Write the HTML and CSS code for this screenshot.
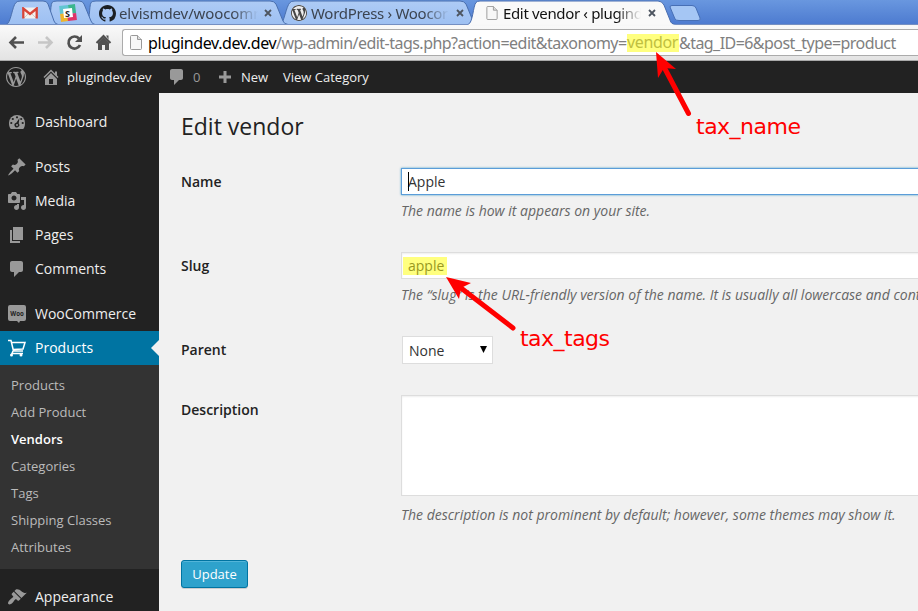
FILE: index.html
```html
<!DOCTYPE html>
<html lang="en">
<head>
<meta charset="utf-8">
<title>Edit vendor ‹ plugindev.dev</title>
<link rel="stylesheet" href="styles.css">
</head>
<body>
<svg class="defs" width="0" height="0">
  <defs>
    <symbol id="wp" viewBox="0 0 20 20"><path d="M20 10c0-5.51-4.49-10-10-10C4.48 0 0 4.49 0 10c0 5.52 4.48 10 10 10 5.51 0 10-4.48 10-10zM7.78 15.37L4.37 6.22c.55-.02 1.17-.08 1.17-.08.5-.06.44-1.13-.06-1.11 0 0-1.45.11-2.37.11-.18 0-.37 0-.58-.01C4.12 2.69 6.87 1.11 10 1.11c2.33 0 4.45.87 6.05 2.34-.68-.11-1.65.39-1.65 1.58 0 .74.45 1.36.9 2.1.35.61.55 1.36.55 2.46 0 1.49-1.4 5-1.4 5l-3.03-8.37c.54-.02.82-.17.82-.17.5-.05.44-1.25-.06-1.22 0 0-1.44.12-2.38.12-.87 0-2.33-.12-2.33-.12-.5-.03-.56 1.2-.06 1.22l.92.08 1.26 3.41zM17.41 10c.24-.64.74-1.87.43-4.25.7 1.29 1.05 2.71 1.05 4.25 0 3.29-1.73 6.24-4.4 7.78.97-2.59 1.94-5.2 2.92-7.78zM6.1 18.09C3.12 16.65 1.11 13.53 1.11 10c0-1.3.23-2.48.72-3.59C3.25 10.3 4.67 14.2 6.1 18.09zm4.03-6.63l2.58 6.98c-.86.29-1.76.45-2.71.45-.79 0-1.57-.11-2.29-.33.81-2.38 1.62-4.74 2.42-7.1z"/></symbol>
    <symbol id="home" viewBox="0 0 20 20"><path d="M16 8.5l1.53 1.53-1.06 1.06L10 4.6l-6.47 6.49-1.06-1.06L10 2.5l4 4v-2h2v4zm-6-2.46l6 5.99V18H4v-5.97zM12 17v-5H8v5h4z"/></symbol>
    <symbol id="comment" viewBox="0 0 20 20"><path d="M5 2h9c1.1 0 2 .9 2 2v7c0 1.1-.9 2-2 2h-2l-5 5v-5H5c-1.1 0-2-.9-2-2V4c0-1.1.9-2 2-2z"/></symbol>
    <symbol id="file" viewBox="0 0 12 15"><path d="M.5 1.5q0-1 1-1H7.500L11.500 4.500V13.500q0 1-1 1h-9q-1 0-1-1z" fill="#f7f7f7" stroke="#999"/><path d="M7.500.5V4.500H11.500" fill="#ddd" stroke="#999"/></symbol>
  </defs>
</svg>

<div class="browser">
  <div class="tabstrip">
    <svg class="tabshapes" width="918" height="26" viewBox="0 0 918 26">
      <defs><linearGradient id="tg" x2="0" y2="1"><stop stop-color="#aecbf5"/><stop offset="1" stop-color="#9dc0f2"/></linearGradient></defs>
      <g fill="url(#tg)" stroke="#496fae">
        <path d="M280 24.500C284 24 286 6 290 2.500Q291 1 295 1H460Q464 1 466 4L473 21Q474 24 478 24.500z"/>
        <path d="M86 24.500C90 24 89 6 91 2.500Q92 1 96 1H270Q274 1 276 4L283 21Q284 24 288 24.500z"/>
        <path d="M47 24.500C51 24 50 6 52 2.500Q53 1 57 1H79Q83 1 84 4L91 21Q92 24 95 24.500z"/>
        <path d="M6 24.500C11 24 12 6 16 2.500Q17 1 21 1H43Q47 1 48 4L54 21Q55 24 58 24.500z"/>
      </g>
      <path d="M670 7Q670 5.500 672 5.500H692Q695 5.500 696 8L700 18Q701 20.500 698 20.500H679Q676 20.500 675 19z" fill="#a5c6f4" stroke="#476fb5"/>
      <path d="M0 26V24.500H468C473 23 473 6 476 2.500Q477 1 480 1H658Q662 1 664 5L670 20Q671 24.500 676 24.500H918V26z" fill="#f9f9f9" stroke="#486db0"/>
      <path d="M0 25.500H918" stroke="#f7f7f7" stroke-width="1.500"/>
    </svg>
    <div class="tab tab-gmail">
      <svg width="16" height="12" viewBox="0 0 16 12"><rect x="1" y=".5" width="14" height="11" rx="1" fill="#f4f1ee"/><path d="M2 11l5-5M14 11L9 6" stroke="#cfcac6"/><path d="M1.300 11.500V1.500L8 7l6.700-5.500v10" fill="none" stroke="#d84437" stroke-width="2.300"/></svg>
    </div>
    <div class="tab tab-slack">
      <svg width="18" height="18" viewBox="0 0 18 18"><g transform="rotate(-7 9 9)"><path d="M1 1h9v8H1z" fill="#61c6d2"/><path d="M10 1h7v9h-7z" fill="#3bb68e"/><path d="M1 9h9v8H1z" fill="#edb52c"/><path d="M8 10h9v7H8z" fill="#df3468"/><rect x="4.500" y="4.500" width="9" height="9" fill="#fff"/></g><text x="6" y="12.500" class="slack-s">S</text></svg>
    </div>
    <div class="tab tab-github">
      <svg width="17" height="17" viewBox="0 0 16 16"><path fill="#1b1f23" d="M8 0C3.580 0 0 3.580 0 8c0 3.540 2.290 6.530 5.470 7.590.4.070.55-.17.55-.38 0-.19-.01-.82-.01-1.490-2.010.37-2.530-.49-2.690-.94-.09-.23-.48-.94-.82-1.130-.28-.15-.68-.52-.01-.53.63-.01 1.080.58 1.230.82.72 1.210 1.870.87 2.330.66.07-.52.28-.87.51-1.070-1.780-.2-3.640-.89-3.640-3.950 0-.87.31-1.590.82-2.150-.08-.2-.36-1.020.08-2.120 0 0 .67-.21 2.200.82.64-.18 1.320-.27 2-.27s1.360.09 2 .27c1.530-1.040 2.200-.82 2.200-.82.44 1.100.16 1.920.08 2.120.51.56.82 1.270.82 2.150 0 3.070-1.870 3.750-3.650 3.950.29.25.54.73.54 1.480 0 1.070-.01 1.930-.01 2.200 0 .21.15.46.55.38A8.010 8.010 0 0016 8c0-4.420-3.580-8-8-8z"/></svg>
      <span class="tab-title t1">elvismdev/woocomm</span>
      <svg class="close" width="8" height="8"><path d="M1 1l6 6M7 1L1 7"/></svg>
    </div>
    <div class="tab tab-wp">
      <svg width="16" height="16"><circle cx="8" cy="8" r="8" fill="#eee"/><use href="#wp" width="16" height="16" fill="#464646"/></svg>
      <span class="tab-title t2">WordPress › Woocor</span>
      <svg class="close" width="8" height="8"><path d="M1 1l6 6M7 1L1 7"/></svg>
    </div>
    <div class="tab tab-active">
      <svg width="12" height="14"><use href="#file" width="12" height="14"/></svg>
      <span class="tab-title t3">Edit vendor ‹ plugind</span>
      <svg class="close" width="8" height="8"><path d="M1 1l6 6M7 1L1 7"/></svg>
    </div>
  </div>
  <div class="toolbar">
    <svg class="nav-icons" width="122" height="34" viewBox="0 0 122 34" fill="none">
      <path d="M24 16.500H11M16 11l-5.500 5.500L16 22" stroke="#505050" stroke-width="2.600"/>
      <path d="M38 16.500H51M46 11l5.500 5.500L46 22" stroke="#c6c6c6" stroke-width="2.600"/>
      <path d="M79 12.500A6 6 0 1 0 80 19" stroke="#505050" stroke-width="2.700"/><path d="M82 9v7h-7z" fill="#505050"/>
      <path d="M96.500 17L103.500 10l7 7" stroke="#505050" stroke-width="2"/><path d="M98 16.500l5.500-5.500 5.500 5.500V24h-4v-5h-3v5h-4zM106 9.500h2.500v4z" fill="#505050"/>
    </svg>
    <div class="omnibox">
      <svg width="12" height="15"><use href="#file" width="12" height="15"/></svg>
      <div class="url"><span class="host">plugindev.dev.dev</span><span class="path1">/wp-admin/edit-tags.php?action=edit&amp;taxonomy=</span><mark>vendor</mark><span class="path2">&amp;tag_ID=6&amp;post_type=product</span></div>
    </div>
  </div>
</div>

<header class="adminbar">
  <svg class="ab-wp" width="20" height="20"><use href="#wp" width="20" height="20"/></svg>
  <svg class="ab-home" width="20" height="20"><use href="#home" width="20" height="20"/></svg>
  <span class="ab-site">plugindev.dev</span>
  <svg class="ab-comment" width="20" height="20"><use href="#comment" width="20" height="20"/></svg>
  <span class="ab-count">0</span>
  <svg class="ab-plus" width="14" height="14"><path d="M5.500 1h3v4.500H13v3H8.500V13h-3V8.500H1v-3h4.500z"/></svg>
  <span class="ab-new">New</span>
  <span>View Category</span>
</header>

<div class="layout">
  <nav class="menu">
    <a class="item"><svg viewBox="0 0 20 20"><path d="M3.760 17h12.480c1.340-1.630 1.760-3.720 1.760-6a8 8 0 0 0-16 0c0 2.280.42 4.370 1.760 6z"/><g class="cut"><circle cx="10" cy="5.300" r="1.100"/><circle cx="5.800" cy="7" r="1.100"/><circle cx="14.200" cy="7" r="1.100"/><circle cx="4.300" cy="11" r="1.100"/><circle cx="15.700" cy="11" r="1.100"/><path d="M12.500 6L11.700 11.500a2.400 2.400 0 1 1-2.400-.8z"/></g><circle cx="10" cy="13" r="1"/></svg>Dashboard</a>
    <a class="item gap"><svg viewBox="0 0 20 20"><path d="M10.440 3.020l1.820-1.820 6.360 6.350-1.830 1.820c-1.050-.68-2.480-.57-3.410.36l-.75.75c-.92.93-1.040 2.350-.35 3.410l-1.830 1.820-2.410-2.410-2.800 2.790c-.42.42-3.380 2.710-3.800 2.290s1.860-3.390 2.280-3.810l2.790-2.790L4.100 9.360l1.830-1.820c1.050.69 2.480.57 3.400-.36l.75-.75c.93-.92 1.050-2.350.36-3.410z"/></svg>Posts</a>
    <a class="item"><svg viewBox="0 0 20 20"><path d="M13 11V4c0-.55-.45-1-1-1h-1.670L9 1H5L3.670 3H2c-.55 0-1 .45-1 1v7c0 .55.45 1 1 1h10c.55 0 1-.45 1-1zM7 4.500c1.380 0 2.500 1.120 2.500 2.500S8.380 9.500 7 9.500 4.500 8.380 4.500 7 5.620 4.500 7 4.500zM14 6h5v10.500c0 1.380-1.120 2.500-2.500 2.500S14 17.880 14 16.500s1.120-2.500 2.500-2.500c.17 0 .34.020.5.050V9h-3V6zm-4 8.050V13h2v3.500c0 1.380-1.120 2.500-2.500 2.500S7 17.880 7 16.500 8.120 14 9.500 14c.17 0 .34.020.5.050z"/></svg>Media</a>
    <a class="item"><svg viewBox="0 0 20 20"><path d="M6 15V2h10v13H6zm-1 1h8v2H3V5h2v11z"/></svg>Pages</a>
    <a class="item"><svg viewBox="0 0 20 20"><use href="#comment" width="20" height="20"/></svg>Comments</a>
    <a class="item gap"><svg viewBox="0 0 20 20"><path d="M3 1h14q2 0 2 2v12q0 2-2 2h-4l-1 2-2-2H3q-2 0-2-2V3q0-2 2-2z"/><text x="3.300" y="12" class="woo-t" textLength="13.500" lengthAdjust="spacingAndGlyphs">Woo</text></svg>WooCommerce</a>
    <a class="item current"><svg viewBox="0 0 20 20"><path d="M1 2.500h3l2.500 10.500h9.500M4.500 4.500h13.500l-2 6.500-10 .5M6 13l-1 2.500h11" fill="none" stroke="#fff" stroke-width="1.500"/><circle cx="4.500" cy="17" r="1.500"/><circle cx="14" cy="17" r="1.500"/></svg>Products</a>
    <div class="submenu">
      <a>Products</a><a>Add Product</a><a class="on">Vendors</a><a>Categories</a><a>Tags</a><a>Shipping Classes</a><a>Attributes</a>
    </div>
    <a class="item gap"><svg viewBox="0 0 20 20"><path d="M14.480 11.060L7.410 3.990l1.500-1.500c.5-.56 2.300-.47 3.510.32 1.210.8 1.430 1.280 2.910 2.100 1.180.64 2.450 1.260 4.450.85zm-.71.71L6.700 4.700 4.930 6.470c-.39.39-.39 1.020 0 1.410l1.060 1.060c.39.39.39 1.030 0 1.420-.6.6-1.430 1.110-2.210 1.690-.35.26-.7.53-1.010.84C1.430 14.230.4 16.080 1.400 17.070c.99 1 2.840-.03 4.180-1.360.31-.31.58-.66.85-1.020.57-.78 1.080-1.610 1.690-2.210.39-.39 1.020-.39 1.410 0l1.060 1.060c.39.39 1.020.39 1.410 0z"/></svg>Appearance</a>
  </nav>
  <main class="content">
    <h2>Edit vendor</h2>
    <div class="form">
      <label>Name</label>
      <div class="field"><div class="input focus"><i class="caret"></i>Apple</div><p>The name is how it appears on your site.</p></div>
      <label>Slug</label>
      <div class="field"><div class="input"><mark class="slug">apple</mark></div><p>The “slug” is the URL-friendly version of the name. It is usually all lowercase and contains only letters, numbers, and hyphens.</p></div>
      <label>Parent</label>
      <div class="field"><div class="select">None<svg width="7" height="7"><path d="M0 0h7L3.500 7z"/></svg></div></div>
      <label>Description</label>
      <div class="field"><div class="textarea"></div><p>The description is not prominent by default; however, some themes may show it.</p></div>
    </div>
    <button class="update">Update</button>
  </main>
</div>

<svg class="notes" width="918" height="611" viewBox="0 0 918 611">
  <path d="M688.500 113.500L664 67" stroke="#f00" stroke-width="5" stroke-linecap="round"/>
  <path d="M656 52L676 69L664 68L658 78z"/>
  <path d="M513 328L461 288" stroke="#f00" stroke-width="5" stroke-linecap="round"/>
  <path d="M446 277L471 283L461 288L459 299z"/>
  <text x="696" y="134" textLength="105">tax_name</text>
  <text x="520" y="346" textLength="90">tax_tags</text>
</svg>
</body>
</html>
```
FILE: styles.css
```css
* { box-sizing: border-box; }
body { margin: 0; width: 918px; height: 611px; overflow: hidden; position: relative; background: #f1f1f1; font: 13px/18px "Open Sans", sans-serif; color: #333; }
svg { flex: none; display: block; }
.defs { position: absolute; }

.browser { font-family: "Noto Sans", sans-serif; }
.tabstrip { position: relative; height: 26px; display: flex; background: linear-gradient(#6997df, #4b79cf); }
.tabshapes { position: absolute; left: 0; top: 0; }
.tab { position: relative; display: flex; align-items: center; height: 26px; flex: none; font-size: 15px; color: #3c4450; }
.tab-gmail { width: 51px; padding-left: 22px; }
.tab-slack { width: 40px; padding-left: 8px; }
.tab-github { width: 192px; padding-left: 8px; }
.tab-wp { width: 192px; padding-left: 8px; }
.tab-active { width: 192px; padding-left: 11px; color: #111; }
.tab-title { display: block; overflow: hidden; white-space: nowrap; line-height: 24px; -webkit-mask-image: linear-gradient(90deg, #000 82%, transparent); mask-image: linear-gradient(90deg, #000 82%, transparent); }
.t1 { width: 139px; margin-left: 3px; letter-spacing: -.1px; }
.t2 { width: 138px; margin-left: 4px; letter-spacing: -.3px; }
.t3 { width: 138px; margin-left: 5px; letter-spacing: -.35px; }
.close { margin-left: 6px; stroke: #4d5560; stroke-width: 1.800; }
.tab-wp .close { margin-left: 7px; }
.tab-active .close { margin-left: 7px; }
.slack-s { font: bold 9px "Open Sans", sans-serif; fill: #222; }

.toolbar { height: 35px; display: flex; background: linear-gradient(#f9f9f9, #e3e3e3); border-bottom: 1px solid #aaa; }
.omnibox { flex: 1; height: 27px; margin-top: 3px; display: flex; align-items: center; gap: 6px; padding-left: 7px; background: #fff; border: 1px solid #ababab; border-right: 0; border-radius: 3px 0 0 3px; }
.url { display: flex; font-size: 16px; line-height: 24px; white-space: nowrap; color: #808080; }
.host { width: 128px; letter-spacing: -.4px; color: #000; }
.path1 { width: 351px; letter-spacing: -.53px; }
.path2 { letter-spacing: -.55px; }
.url mark { width: 52px; letter-spacing: -.35px; background: #ffff7f; color: #c0c03f; height: 18px; line-height: 17px; margin-top: 3px; }

.adminbar { height: 32px; display: flex; align-items: center; background: #222; color: #eee; fill: #999; }
.ab-wp { margin-left: 6px; }
.ab-home { margin-left: 15px; }
.ab-site { margin-left: 6px; width: 85px; }
.ab-comment { margin-left: 15px; }
.ab-count { margin-left: 6px; color: #999; width: 8px; }
.ab-plus { margin-left: 17px; }
.ab-new { margin-left: 9px; width: 27px; margin-right: 15px; }

.layout { display: flex; height: 518px; }
.menu { width: 159px; padding-top: 12px; background: #222; font-size: 14px; color: #eee; flex: none; }
.item { position: relative; display: flex; align-items: center; height: 34px; padding-left: 7px; gap: 8px; }
.item svg { width: 20px; height: 20px; fill: #999; }
.item.gap { margin-top: 11px; }
.item .cut { fill: #222; }
.woo-t { font: bold 7px "Open Sans", sans-serif; fill: #222; }
.item.current { background: #0074a2; color: #fff; }
.item.current svg { fill: #fff; }
.item.current::after { content: ""; position: absolute; right: 0; top: 9px; border: 8px solid transparent; border-right-color: #f1f1f1; border-left: 0; }
.submenu { height: 204px; padding: 7px 11px; background: #333; color: #bbb; font-size: 13px; }
.submenu a { display: block; height: 27px; line-height: 27px; }
.submenu .on { color: #fff; font-weight: 600; }

.content { flex: 1; min-width: 0; overflow: hidden; padding: 19px 0 0 22px; }
h2 { margin: 0 0 26px; font-size: 23px; line-height: 29px; font-weight: 400; color: #222; }
.form { display: grid; grid-template-columns: 220px 540px; grid-template-rows: 84px 84px 60px 165px; font-size: 14px; }
.form label { font-weight: 600; color: #222; line-height: 20px; padding-top: 5px; }
.field { white-space: nowrap; }
.input { position: relative; display: flex; align-items: center; height: 27px; margin-top: 1px; padding: 1px 0 0 6px; border: 1px solid #ddd; background: #fff; box-shadow: inset 0 1px 2px rgba(0,0,0,.07); }
.input.focus { border-color: #5b9dd9; box-shadow: 0 0 2px rgba(30,140,190,.8); }
.caret { position: absolute; left: 6px; top: 3px; width: 1px; height: 19px; background: #000; }
.slug { background: #ffff7f; color: #99991f; margin-left: -5px; padding: 0 3px 0 5px; height: 18px; line-height: 18px; }
.field p { margin: 6px 0 0; font-size: 14px; line-height: 20px; font-style: italic; color: #666; }
.select { width: 91px; height: 28px; margin: 1px 0 0 1px; padding: 2px 5px 0 6px; display: flex; align-items: center; justify-content: space-between; border: 1px solid #ddd; background: #fff; }
.select svg { margin-bottom: 4px; }
.textarea { height: 101px; border: 1px solid #ddd; background: #fff; box-shadow: inset 0 1px 2px rgba(0,0,0,.07); }
.textarea + p { margin-top: 9px; }
.update { display: block; width: 67px; height: 28px; padding: 0; font: 13px "Open Sans", sans-serif; color: #fff; background: #2ea2cc; border: 1px solid #0074a2; border-radius: 3px; box-shadow: inset 0 1px 0 rgba(120,200,230,.5), 0 1px 0 rgba(0,0,0,.15); }

.notes { position: absolute; left: 0; top: 0; fill: #f00; font: 22px "DejaVu Sans", sans-serif; }
```
